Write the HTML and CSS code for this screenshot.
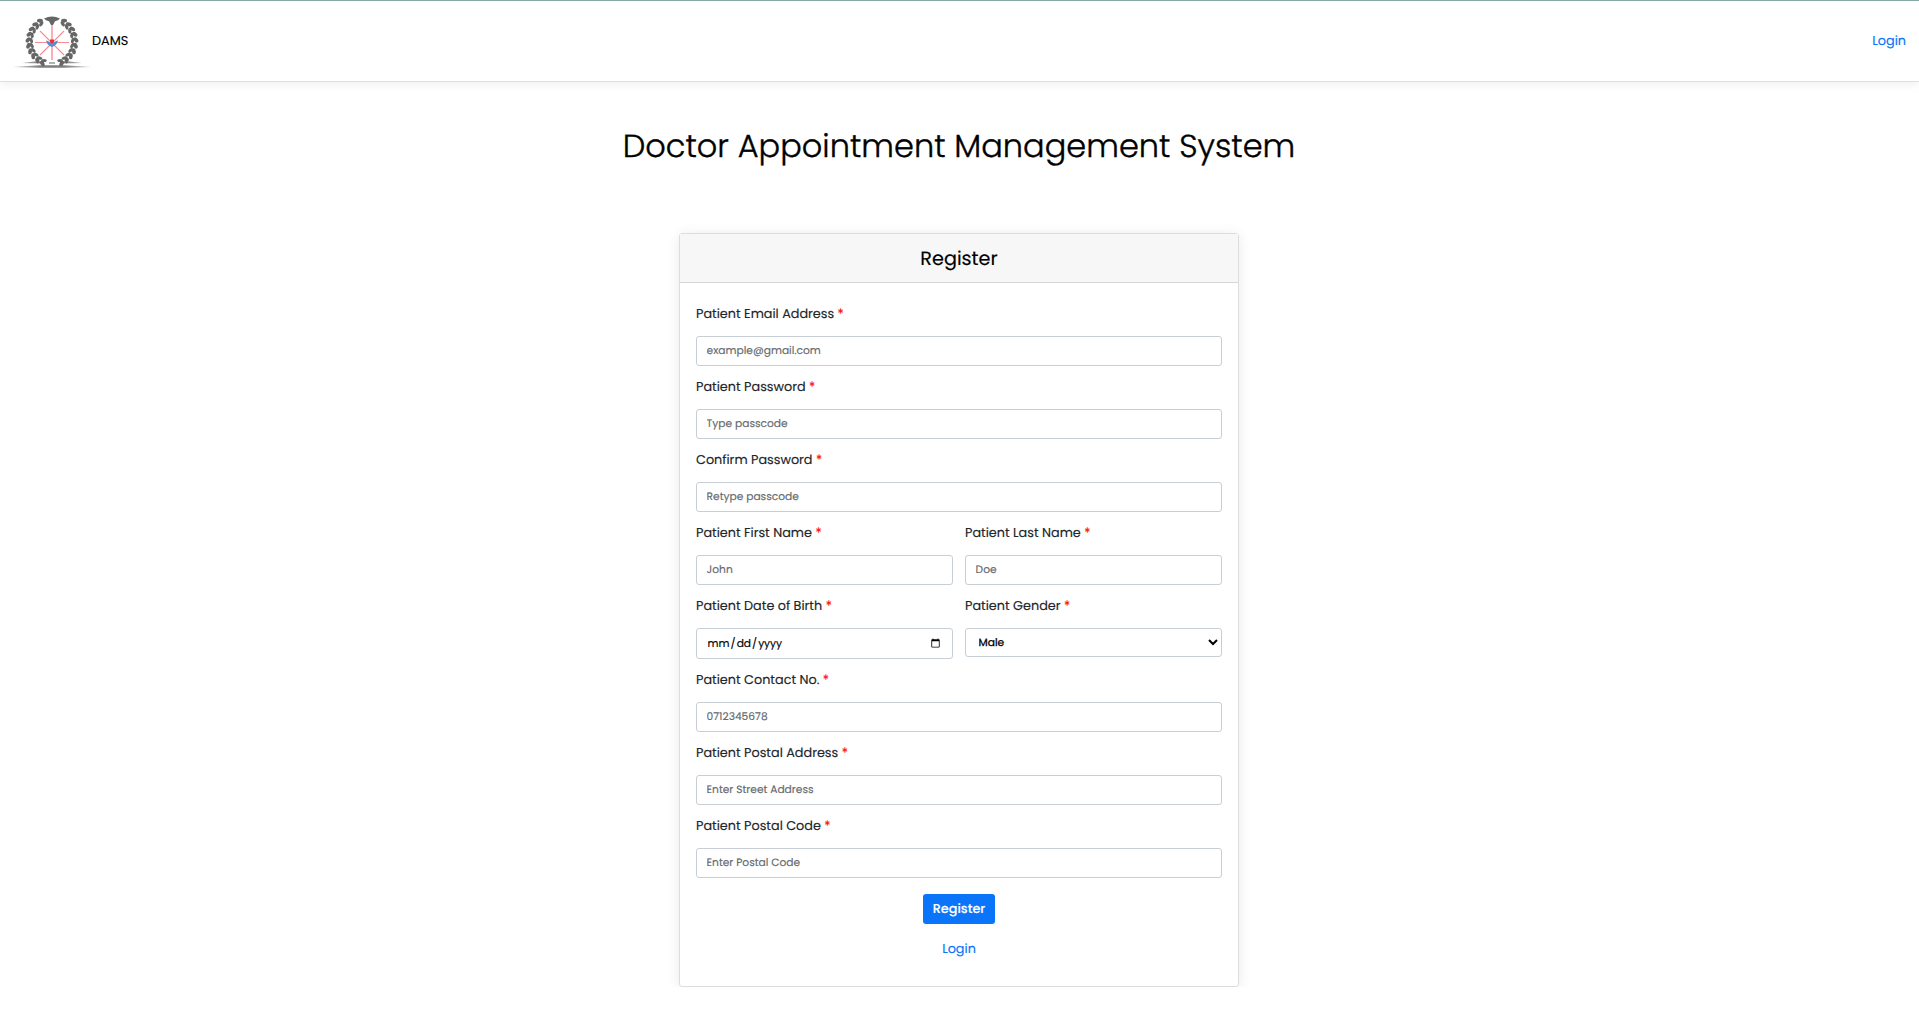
FILE: index.html
```
<!DOCTYPE html>
<html lang="en">
<head>
<meta charset="utf-8">
<title>Doctor Appointment Management System</title>
<link rel="stylesheet" href="styles.css">
</head>
<body>
<header class="navbar">
  <a class="brand" href="#">
    <svg class="logo" viewBox="8 8 84 64" width="84" height="64">
      <defs>
        <linearGradient id="fade"><stop offset="0" stop-color="#555" stop-opacity=".35"/><stop offset=".35" stop-color="#555"/><stop offset=".65" stop-color="#555"/><stop offset="1" stop-color="#555" stop-opacity=".35"/></linearGradient>
        <g id="leaf">
          <ellipse cx="49.800" cy="17.600" rx="3" ry="1.900" transform="rotate(28 49.800 17.600)"/>
          <ellipse cx="49.800" cy="20.900" rx="2.900" ry="1.600" transform="rotate(-30 49.800 20.900)"/>
        </g>
        <g id="branch">
          <use href="#leaf" transform="rotate(-25 52 41.500)"/>
          <use href="#leaf" transform="rotate(-39 52 41.500)"/>
          <use href="#leaf" transform="rotate(-53 52 41.500)"/>
          <use href="#leaf" transform="rotate(-67 52 41.500)"/>
          <use href="#leaf" transform="rotate(-81 52 41.500)"/>
          <use href="#leaf" transform="rotate(-95 52 41.500)"/>
          <use href="#leaf" transform="rotate(-109 52 41.500)"/>
          <use href="#leaf" transform="rotate(-123 52 41.500)"/>
          <use href="#leaf" transform="rotate(-137 52 41.500)"/>
          <use href="#leaf" transform="rotate(-151 52 41.500)"/>
        </g>
      </defs>
      <path d="M12 67 40 65.300h24l28 1.700-28 .8H40zM22 63 34 61.600h10v1.900zM82 63 70 61.600H60v1.900z" fill="url(#fade)" opacity=".75"/>
      <g fill="#666">
        <use href="#branch"/>
        <use href="#branch" transform="translate(104 0) scale(-1 1)"/>
        <path d="M44 18.500q8-3.800 16 0-1.500 2.300-5 2.800L53 25h-2l-2-3.700q-3.500-.5-5-2.800z"/>
        <path d="M49 62.500h6v1h-6z"/>
      </g>
      <g stroke="#fa8d94" stroke-width="1.100">
        <path d="M35 42.500h34M40 31l24 24M64 31 40 55"/>
        <path d="M52 25v35" stroke-width="1.400"/>
      </g>
      <path d="M46 40.500q4 .8 6 4.500 2-3.700 6-4.500-1 4.700-6 6.500-5-1.800-6-6.500z" fill="#4592cf"/>
      <path d="M50 39.500h4V42l-2 2.500-2-2.500z" fill="#df3345"/>
    </svg>
    <span class="brand-name">DAMS</span>
  </a>
  <a class="nav-link" href="#">Login</a>
</header>
<main>
  <h1 class="title">Doctor Appointment Management System</h1>
  <section class="card">
    <h2 class="card-header">Register</h2>
    <form class="card-body">
      <div class="field"><label for="email">Patient Email Address <b>*</b></label><input id="email" type="email" placeholder="example@gmail.com"></div>
      <div class="field"><label for="pass">Patient Password <b>*</b></label><input id="pass" type="password" placeholder="Type passcode"></div>
      <div class="field"><label for="pass2">Confirm Password <b>*</b></label><input id="pass2" type="password" placeholder="Retype passcode"></div>
      <div class="row">
        <div class="field"><label for="first">Patient First Name <b>*</b></label><input id="first" placeholder="John"></div>
        <div class="field"><label for="last">Patient Last Name <b>*</b></label><input id="last" placeholder="Doe"></div>
      </div>
      <div class="row row-birth">
        <div class="field"><label for="dob">Patient Date of Birth <b>*</b></label><input id="dob" class="date" type="date"></div>
        <div class="field"><label for="gender">Patient Gender <b>*</b></label><select id="gender"><option>Male</option><option>Female</option></select></div>
      </div>
      <div class="field"><label for="phone">Patient Contact No. <b>*</b></label><input id="phone" placeholder="0712345678"></div>
      <div class="field"><label for="street">Patient Postal Address <b>*</b></label><input id="street" placeholder="Enter Street Address"></div>
      <div class="field"><label for="code">Patient Postal Code <b>*</b></label><input id="code" placeholder="Enter Postal Code"></div>
      <button class="submit" type="button">Register</button>
      <a class="login" href="#">Login</a>
    </form>
  </section>
</main>
</body>
</html>
```

FILE: styles.css
```
* { box-sizing: border-box; }
body {
  margin: 0;
  background: #fff;
  color: #212529;
  font-family: Poppins, Inter, sans-serif;
  font-size: 12.8px;
  text-rendering: geometricPrecision;
  -webkit-text-stroke: .15px;
}
a { color: #0a74fb; text-decoration: none; }
.navbar {
  display: flex;
  align-items: center;
  justify-content: space-between;
  height: 82px;
  padding: 0 13px 0 8px;
  border-top: 1px solid #83a9a9;
  border-bottom: 1px solid #dedfe0;
  box-shadow: 0 2px 10px rgba(0, 0, 0, .07);
}
.brand { display: flex; align-items: center; color: #000; }
.logo { display: block; margin-top: -2px; }
.brand-name, .nav-link { padding-top: 2px; }
main { padding-right: 1px; }
.title {
  margin: 45px 0 0;
  color: #000;
  font-size: 32px;
  font-weight: 300;
  line-height: 40px;
  text-align: center;
  -webkit-text-stroke: .4px;
}
.card {
  width: 560px;
  height: 754px;
  margin: 66px auto 0;
  border: 1px solid #dcdddd;
  border-radius: 3px;
  box-shadow: 0 2px 14px rgba(0, 0, 0, .09);
}
.card-header {
  height: 49px;
  margin: 0;
  border-bottom: 1px solid #d7d7d7;
  background: #f7f7f7;
  color: #000;
  font-size: 19.2px;
  font-weight: 400;
  line-height: 50px;
  text-align: center;
}
.card-body {
  display: flex;
  flex-direction: column;
  padding: 17px 16px 0;
}
.field { display: flex; flex-direction: column; height: 73px; }
.row { display: grid; grid-template-columns: 1fr 1fr; gap: 12px; }
.row-birth { height: 74px; }
label { height: 36px; line-height: 29px; }
label b { color: #f00; font-weight: 400; }
input, select {
  width: 100%;
  height: 30px;
  padding: 0 9.6px 1px;
  border: 1px solid #c8ced5;
  border-radius: 3px;
  background: #fff;
  color: #000;
  font: 400 10.667px Poppins, Inter, sans-serif;
  text-rendering: geometricPrecision;
}
input::placeholder { color: #66696c; opacity: 1; }
.date { height: 31px; padding: 0 9px 0 9.6px; }
select { height: 29px; padding: 0 8.6px; -webkit-text-stroke: .3px; }
.submit {
  align-self: center;
  width: 72px;
  height: 30px;
  margin-top: 9px;
  padding: 2px 0 0;
  border: 0;
  border-radius: 3px;
  background: #0a74fb;
  color: #fff;
  font: 500 12.8px Poppins, Inter, sans-serif;
  text-rendering: geometricPrecision;
}
.login { align-self: center; margin-top: 17px; }
```
